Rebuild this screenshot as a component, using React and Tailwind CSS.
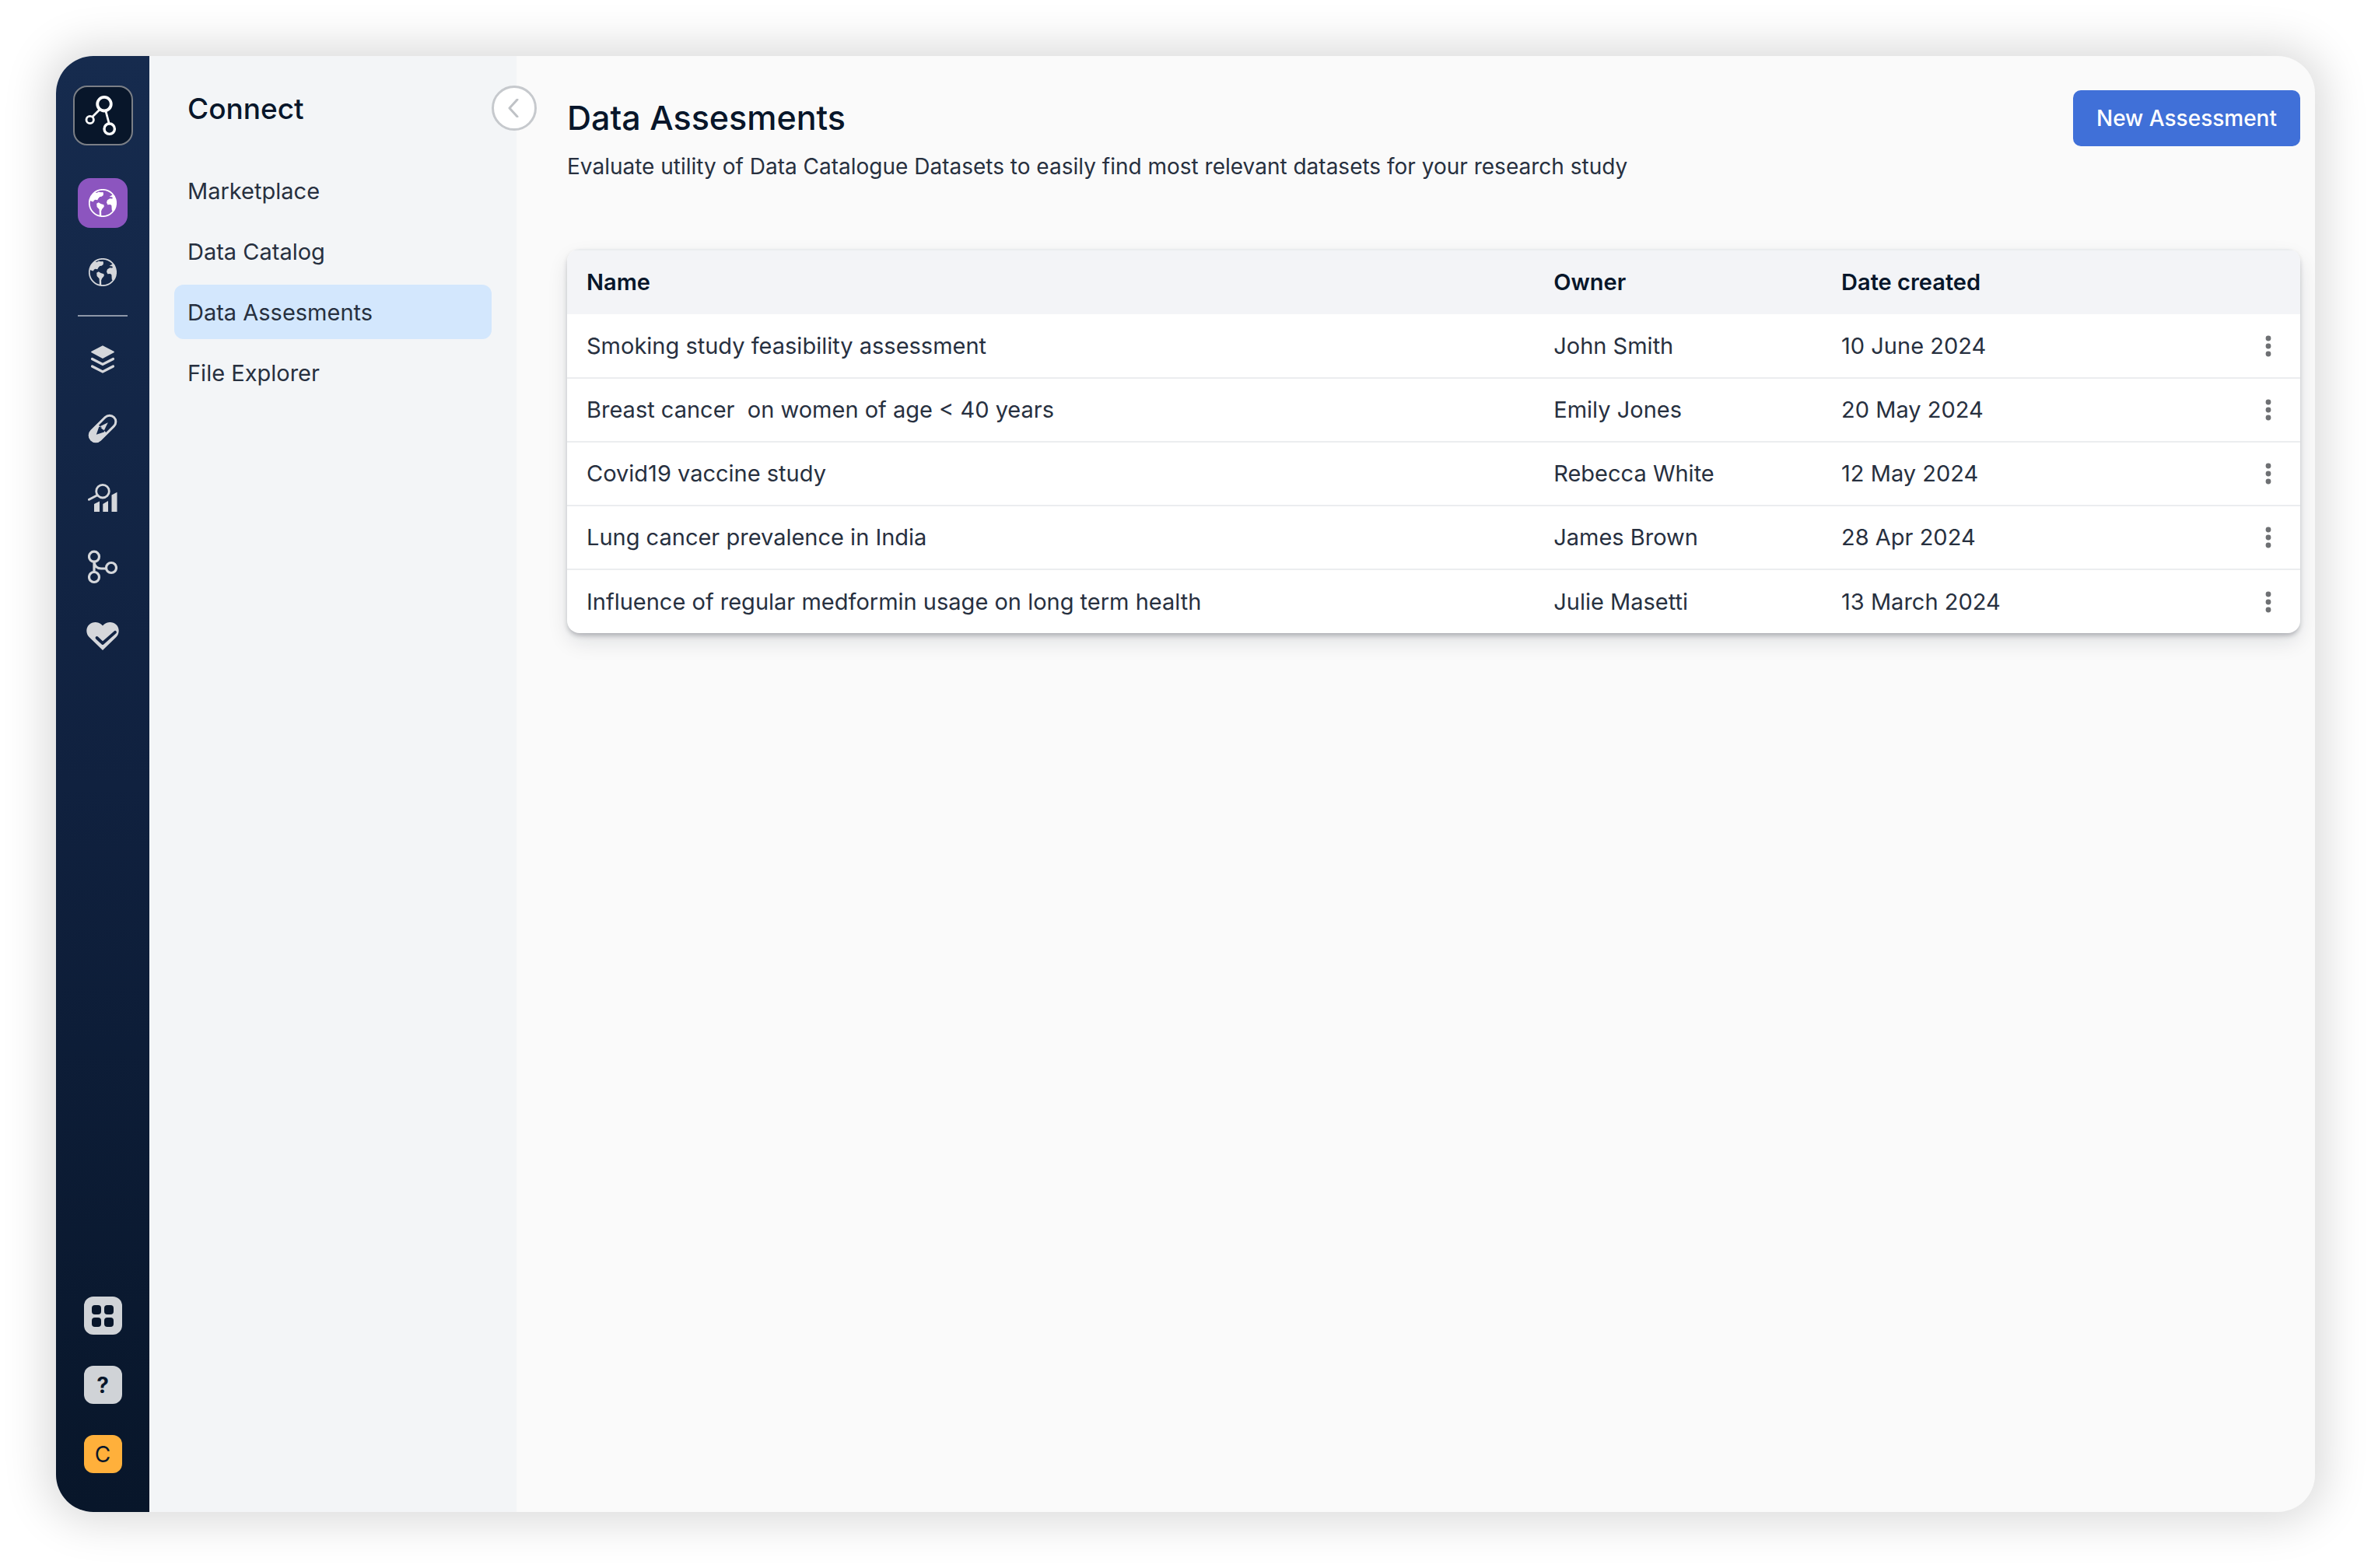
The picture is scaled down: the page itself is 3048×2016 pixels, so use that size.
import React from "react";

const assessments = [
  { name: "Smoking study feasibility assessment", owner: "John Smith", date: "10 June 2024" },
  { name: "Breast cancer  on women of age < 40 years", owner: "Emily Jones", date: "20 May 2024" },
  { name: "Covid19 vaccine study", owner: "Rebecca White", date: "12 May 2024" },
  { name: "Lung cancer prevalence in India", owner: "James Brown", date: "28 Apr 2024" },
  { name: "Influence of regular medformin usage on long term health", owner: "Julie Masetti", date: "13 March 2024" },
];

const sections = ["Marketplace", "Data Catalog", "Data Assesments", "File Explorer"];

function Logo() {
  return (
    <svg viewBox="0 0 73 73" className="size-full" fill="none" stroke="#fff" aria-hidden="true">
      <path d="M32 29 23 38M40 31l4 15" strokeWidth="2.8" />
      <circle cx="38" cy="21.7" r="8.8" strokeWidth="3.8" />
      <circle cx="19.7" cy="42" r="4.7" strokeWidth="2.8" />
      <circle cx="44.7" cy="53.7" r="6.7" strokeWidth="3.4" />
    </svg>
  );
}

function Globe() {
  return (
    <svg viewBox="0 0 36 36" className="size-9" aria-hidden="true">
      <circle cx="18" cy="18" r="17.2" fill="none" stroke="currentColor" strokeWidth="1.7" />
      <g fill="currentColor">
        <path d="M1.5 15C3 9 5 6 8 4.300L10.500 5l2-1.300 3.500.6 2.300-.3c.9 1.200.8 3 .2 4.300l-2 1.500-2.200.2-2 2.300-1 2-3-.6-1.500 1-1 1.800z" />
        <path d="M10.200 18.800l2.500-1.500 2.800 1.700 4 1.300.3 2.500-2.700 3.300-1 2.500.2 6.200-2.400-.6-.3-7.900-3-3.300z" />
        <path d="M26.500 10l4.500-2.700 2 1 1.800 5 .4 4.700c-.2 4-1.500 8-3.700 10.800l-1.700-1.300-.4-6.300-1.600-1.200-3.500.2-1.300-3 1-3 3.200-2 3 .2.800-1.400-1.500-.8z" />
      </g>
    </svg>
  );
}

function Layers() {
  return (
    <svg viewBox="0 0 36 36" className="size-9" aria-hidden="true">
      <path d="M18 1.200 32 8.500 18 16 4 8.500z" fill="currentColor" stroke="currentColor" strokeWidth="1.800" strokeLinejoin="round" />
      <path d="M4.500 17.500 18 24.500 31.500 17.500M4.500 27 18 34 31.500 27" fill="none" stroke="currentColor" strokeWidth="3.200" strokeLinecap="round" />
    </svg>
  );
}

function Pill() {
  return (
    <svg viewBox="0 0 38 38" className="size-[38px]" aria-hidden="true">
      <g transform="rotate(45 19 19)">
        <rect x="11" y="-1.500" width="16" height="41" rx="8" fill="none" stroke="currentColor" strokeWidth="3" />
        <path d="M10 19.500h18v12a9 9 0 0 1-18 0z" fill="currentColor" />
      </g>
      <path d="M15 16.500 25.800 11.300 20.500 22z" fill="currentColor" />
      <path d="M10.800 26.800 14.200 17l2.500-.4 4.500 5-.4 2z" fill="#13274a" />
      <path d="M16 17.500 20.800 21.500 19.500 18z" fill="currentColor" />
    </svg>
  );
}

function ChartSearch() {
  return (
    <svg viewBox="0 0 38 36" className="h-9 w-[38px]" aria-hidden="true">
      <circle cx="19" cy="9.700" r="8.300" fill="none" stroke="currentColor" strokeWidth="2.800" />
      <path d="M12 14.700 1.500 20.300" stroke="currentColor" strokeWidth="3" strokeLinecap="round" />
      <path d="M8 26l7-3.400V36H8zM19.300 26l6.700-4v14h-6.700zM30.500 14.500l7-3.800V36h-7z" fill="currentColor" />
    </svg>
  );
}

function Branch() {
  return (
    <svg viewBox="0 0 38 44" className="h-11 w-[38px]" fill="none" stroke="currentColor" strokeWidth="3.200" aria-hidden="true">
      <circle cx="8" cy="8.700" r="6.500" />
      <circle cx="8" cy="35" r="6.500" />
      <circle cx="30" cy="23" r="6.500" />
      <path d="M8 15.500v13M8 16c1 5 4 8 9 8h6.500" />
    </svg>
  );
}

function HeartCheck() {
  return (
    <svg viewBox="0 0 42 36" className="h-9 w-[42px]" aria-hidden="true">
      <path d="M21 36 3.500 19C-1 14-.5 7 3.500 3.300 8-1 15-1 19.500 3L21 4.400 22.500 3C27-1 34-1 38.500 3.300 42.500 7 43 14 38.500 19z" fill="currentColor" />
      <path d="M13.500 20l7.500 7L37 12.800" fill="none" stroke="#112343" strokeWidth="3.800" strokeLinecap="round" strokeLinejoin="round" />
    </svg>
  );
}

function RailButton({ label, active, children }) {
  return (
    <button
      type="button"
      aria-label={label}
      className={
        active
          ? "flex size-16 items-center justify-center rounded-2xl bg-[#8c55bf] text-white"
          : "flex size-16 items-center justify-center rounded-2xl text-[#d5d7db]"
      }
    >
      {children}
    </button>
  );
}

function Rail() {
  return (
    <nav aria-label="Apps" className="flex w-[120px] shrink-0 flex-col items-center bg-linear-to-b from-[#162b4e] via-[#10213f] to-[#08162a] pt-[38px] pb-[50px]">
      <a href="#home" aria-label="Home" className="size-[77px] overflow-hidden rounded-[18px] border-2 border-[#7b7f86] bg-[#08162a]">
        <Logo />
      </a>
      <div className="mt-[42px] flex flex-col gap-[25px]">
        <RailButton label="Connect" active><Globe /></RailButton>
        <RailButton label="Explore"><Globe /></RailButton>
      </div>
      <hr className="my-[23px] h-[2px] w-16 border-0 bg-[#8d97a8]" />
      <div className="flex flex-col gap-[25px]">
        <RailButton label="Layers"><Layers /></RailButton>
        <RailButton label="Treatments"><Pill /></RailButton>
        <RailButton label="Analytics"><ChartSearch /></RailButton>
        <RailButton label="Workflows"><Branch /></RailButton>
        <RailButton label="Health"><HeartCheck /></RailButton>
      </div>
      <div className="mt-auto flex flex-col gap-10">
        <button type="button" aria-label="All apps" className="grid size-[49px] grid-cols-2 content-center justify-center gap-1 rounded-xl bg-[#d0d3d7] px-[10px]">
          <span className="size-[12px] justify-self-end rounded-sm bg-[#08162a]" />
          <span className="size-[12px] rounded-sm bg-[#08162a]" />
          <span className="size-[12px] justify-self-end rounded-sm bg-[#08162a]" />
          <span className="size-[12px] rounded-sm bg-[#08162a]" />
        </button>
        <button type="button" aria-label="Help" className="size-[49px] rounded-xl bg-[#d0d3d7] text-[28px] font-bold text-[#08162a]">?</button>
        <button type="button" aria-label="Account" className="size-[49px] rounded-xl bg-[#ffb03b] text-[28px] text-[#08162a]">C</button>
      </div>
    </nav>
  );
}

function Sidebar() {
  return (
    <aside className="relative w-[472px] shrink-0 bg-[#f3f5f7] px-8 pt-11">
      <h2 className="px-[17px] text-[37px] leading-[48px] font-medium text-[#08162a]">Connect</h2>
      <button type="button" aria-label="Collapse" className="absolute top-[38px] -right-[26px] flex size-[58px] items-center justify-center rounded-full border-3 border-[#c6c9cd] bg-white">
        <svg viewBox="0 0 24 24" className="size-6" fill="none" stroke="#bfc2c6" strokeWidth="3" strokeLinecap="round" strokeLinejoin="round" aria-hidden="true">
          <path d="M16 1 6 12l10 11" />
        </svg>
      </button>
      <ul className="mt-[46px] flex flex-col gap-2">
        {sections.map((s) => (
          <li key={s}>
            <a
              href="#section"
              className={
                s === "Data Assesments"
                  ? "block rounded-xl bg-[#d3e7fd] px-[17px] pt-[2px] text-[29px] leading-[68px]"
                  : "block rounded-xl px-[17px] pt-[2px] text-[29px] leading-[68px]"
              }
            >
              {s}
            </a>
          </li>
        ))}
      </ul>
    </aside>
  );
}

function Dots() {
  return (
    <svg viewBox="0 0 8 28" className="h-7 w-2" fill="#6e7073" aria-hidden="true">
      <circle cx="4" cy="4" r="3.400" />
      <circle cx="4" cy="14" r="3.400" />
      <circle cx="4" cy="24" r="3.400" />
    </svg>
  );
}

function AssessmentTable() {
  return (
    <div className="mt-[85px] overflow-hidden rounded-2xl bg-white shadow-[0_4px_6px_-1px_rgba(20,25,40,0.28),0_12px_28px_-2px_rgba(20,25,40,0.12)]">
      <table className="w-full table-fixed text-left text-[29px]">
        <thead>
          <tr className="h-[83px] border-t-2 border-[#ebedef] bg-[#f3f4f7] text-[#08162a]">
            <th className="w-[55.8%] px-[25px] font-semibold">Name</th>
            <th className="w-[16.6%] px-[25px] font-semibold">Owner</th>
            <th className="px-[25px] font-semibold">Date created</th>
            <th className="w-[81px]" aria-label="Actions" />
          </tr>
        </thead>
        <tbody>
          {assessments.map((a) => (
            <tr key={a.name} className="h-[82px] border-b-2 border-[#ebedef] last:border-b-0">
              <td className="px-[25px] whitespace-pre">{a.name}</td>
              <td className="px-[25px]">{a.owner}</td>
              <td className="px-[25px]">{a.date}</td>
              <td>
                <button type="button" aria-label={`Actions for ${a.name}`} className="flex h-16 w-20 items-center justify-center">
                  <Dots />
                </button>
              </td>
            </tr>
          ))}
        </tbody>
      </table>
    </div>
  );
}

export default function App() {
  return (
    <div className="min-h-screen bg-white p-[72px] font-['Inter',sans-serif] text-[28px] text-[#27303f]">
      <div className="flex min-h-[calc(100vh-144px)] overflow-hidden rounded-[48px] bg-[#fafafa] shadow-[0_0_56px_12px_rgba(0,0,0,0.15)]">
        <Rail />
        <Sidebar />
        <main className="min-w-0 flex-1 pt-11 pr-[19px] pl-[65px]">
          <header className="flex items-start justify-between">
            <div className="pt-[7px]">
              <h1 className="text-[43px] leading-[56px] font-medium text-[#08162a]">Data Assesments</h1>
              <p className="mt-[14px] leading-[42px]">
                Evaluate utility of Data Catalogue Datasets to easily find most relevant datasets for your research study
              </p>
            </div>
            <button type="button" className="h-[72px] rounded-[10px] bg-[#4070d8] px-[30px] font-medium text-white">
              New Assessment
            </button>
          </header>
          <AssessmentTable />
        </main>
      </div>
    </div>
  );
}
